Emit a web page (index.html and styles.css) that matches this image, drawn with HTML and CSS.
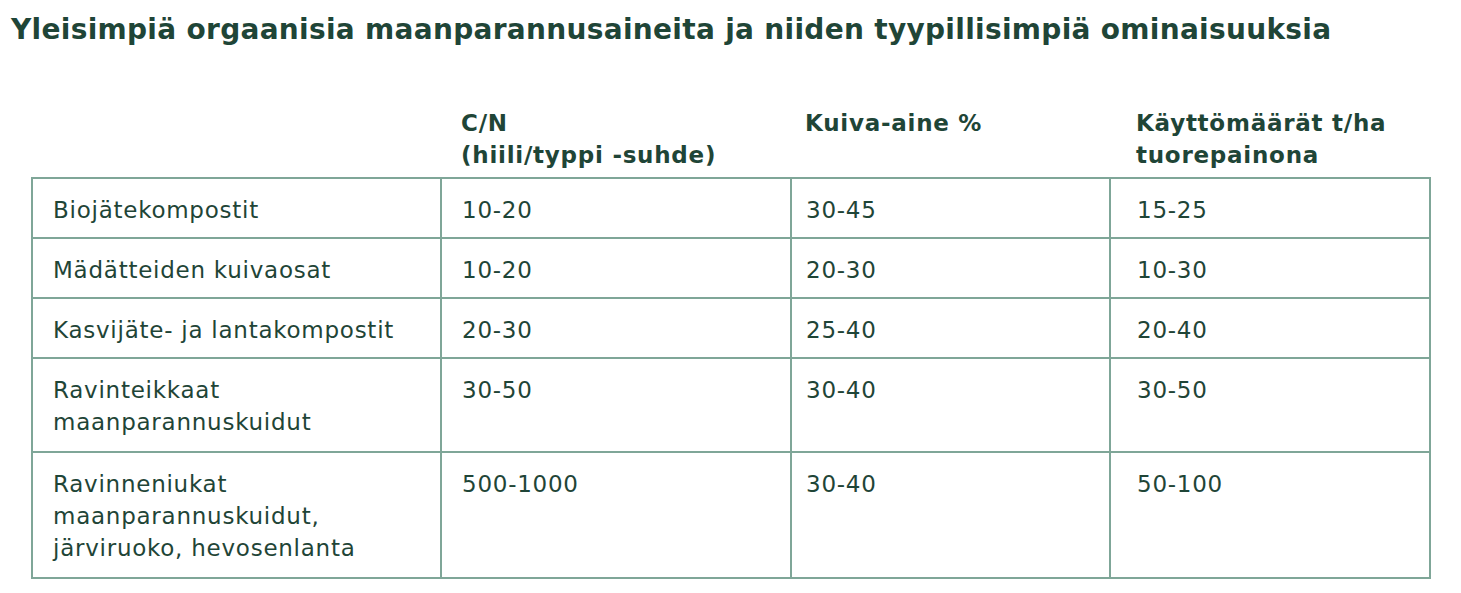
FILE: index.html
```html
<!DOCTYPE html>
<html lang="fi">
<head>
<meta charset="utf-8">
<link rel="stylesheet" href="styles.css">
</head>
<body>
<h2 class="title">Yleisimpiä orgaanisia maanparannusaineita ja niiden tyypillisimpiä ominaisuuksia</h2>
<div class="wrap">
<table class="data">
<colgroup><col class="c1"><col class="c2"><col class="c3"><col class="c4"></colgroup>
<thead>
<tr><th></th><th>C/N<br>(hiili/typpi -suhde)</th><th>Kuiva-aine %</th><th>Käyttömäärät t/ha tuorepainona</th></tr>
</thead>
<tbody>
<tr><td>Biojätekompostit</td><td>10-20</td><td>30-45</td><td>15-25</td></tr>
<tr><td>Mädätteiden kuivaosat</td><td>10-20</td><td>20-30</td><td>10-30</td></tr>
<tr><td>Kasvijäte- ja lantakompostit</td><td>20-30</td><td>25-40</td><td>20-40</td></tr>
<tr class="tall"><td>Ravinteikkaat maanparannuskuidut</td><td>30-50</td><td>30-40</td><td>30-50</td></tr>
<tr class="tall"><td>Ravinneniukat maanparannuskuidut, järviruoko, hevosenlanta</td><td>500-1000</td><td>30-40</td><td>50-100</td></tr>
</tbody>
</table>
</div>
</body>
</html>
```
FILE: styles.css
```css
html, body { margin: 0; padding: 0; background: #fff; }
body { font-family: "DejaVu Sans", sans-serif; color: #1f4537; }
.title { margin: 0; padding: 12px 0 0 11px; font-size: 28px; line-height: 36px; font-weight: 700; letter-spacing: 0.3px; }
.wrap { padding: 59px 0 0 31px; }
.data { border-collapse: collapse; table-layout: fixed; width: 1400px; font-size: 23px; line-height: 32px; letter-spacing: 0.75px; }
.c1 { width: 409px; } .c2 { width: 350px; } .c3 { width: 319px; } .c4 { width: 320px; }
.data th { text-align: left; vertical-align: top; font-weight: 700; padding: 0 10px 6px 20px; border: none; }
.data td { vertical-align: top; padding: 15px 18px 11px 20px; border: 2px solid #7fa698; }
.data tr.tall td { padding-bottom: 13px; }
.data th:nth-child(3), .data td:nth-child(3) { padding-left: 14px; }
.data th:nth-child(4), .data td:nth-child(4) { padding-left: 26px; }
```
